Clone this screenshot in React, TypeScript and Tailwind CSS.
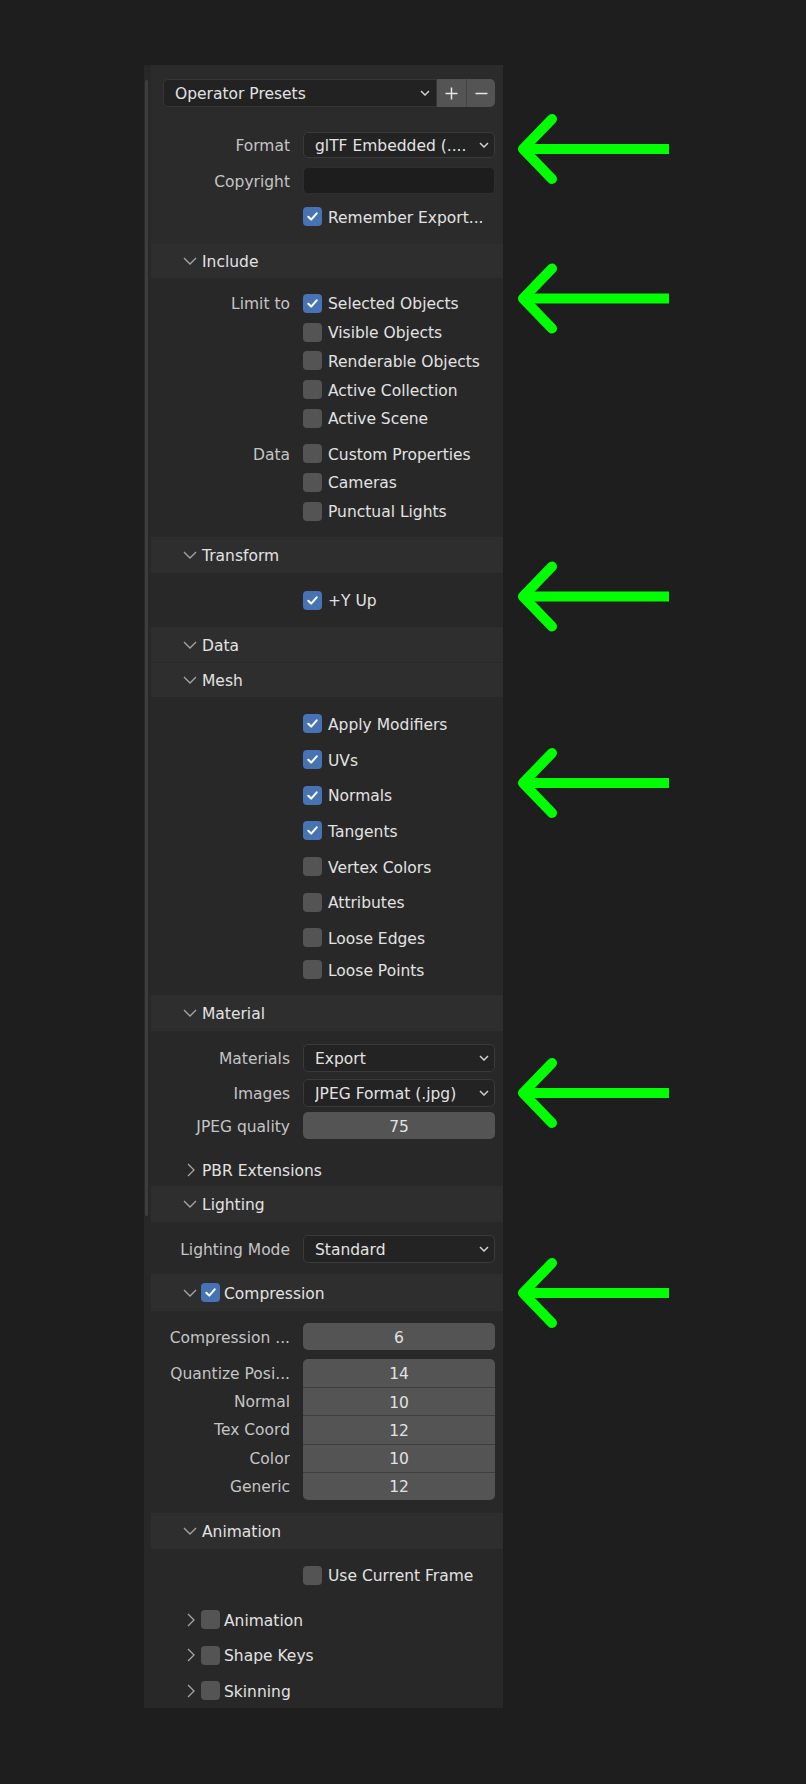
import type { ReactNode } from "react";

// Blender glTF export sidebar with annotation arrows

const ARROWS = [149, 298.5, 596.5, 783, 1093, 1293];

function Check({ on = false }: { on?: boolean }) {
  return (
    <span
      className={
        on
          ? "flex h-[19px] w-[19px] shrink-0 items-center justify-center rounded-[4px] bg-[#4772b3]"
          : "flex h-[19px] w-[19px] shrink-0 items-center justify-center rounded-[4px] bg-[#545454]"
      }
    >
      {on && (
        <svg width="13" height="13" viewBox="0 0 13 13">
          <path
            d="M2.3 6.8 L5.2 9.6 L10.7 3.4"
            fill="none"
            stroke="#ffffff"
            strokeWidth="2.1"
            strokeLinecap="round"
            strokeLinejoin="round"
          />
        </svg>
      )}
    </span>
  );
}

function ChevronDown() {
  return (
    <svg width="14" height="8" viewBox="0 0 14 8" className="shrink-0">
      <path d="M1 1 L7 7 L13 1" fill="none" stroke="#a6a6a6" strokeWidth="1.3" />
    </svg>
  );
}

function ChevronRight() {
  return (
    <svg width="8" height="14" viewBox="0 0 8 14" className="shrink-0">
      <path d="M1 1 L7 7 L1 13" fill="none" stroke="#a6a6a6" strokeWidth="1.3" />
    </svg>
  );
}

function MenuArrow() {
  return (
    <svg width="10" height="6" viewBox="0 0 10 6" className="shrink-0">
      <path d="M1 1 L5 5 L9 1" fill="none" stroke="#d0d0d0" strokeWidth="1.5" />
    </svg>
  );
}

function Label({ children }: { children?: ReactNode }) {
  return <div className="w-[139px] shrink-0 truncate pt-[3px] text-right text-[#c4c4c4]">{children}</div>;
}

function Dropdown({ value }: { value: string }) {
  return (
    <div className="ml-[13px] flex h-full w-[192px] items-center rounded-[5px] border border-[#3a3a3a] bg-[#232323] pl-[11px] pr-[5px] text-[#e2e2e2]">
      <span className="flex-1 truncate pt-[3px]">{value}</span>
      <MenuArrow />
    </div>
  );
}

function NumField({ value }: { value: string }) {
  return (
    <div className="ml-[13px] flex h-full w-[192px] items-center justify-center rounded-[5px] bg-[#545454] text-[#e2e2e2]">
      <span className="pt-[3px]">{value}</span>
    </div>
  );
}

function CheckRow({ label, text, on, className }: { label?: string; text: string; on?: boolean; className: string }) {
  return (
    <div className={`flex items-center ${className}`}>
      <Label>{label}</Label>
      <div className="ml-[13px] flex items-center gap-[6px] text-[#e2e2e2]">
        <Check on={on} />
        <span className="pt-[3px]">{text}</span>
      </div>
    </div>
  );
}

function Header({ title, className, check }: { title: string; className: string; check?: boolean }) {
  return (
    <div className={`flex items-center bg-[#2e2e2e] pl-[32px] text-[#e2e2e2] ${className}`}>
      <ChevronDown />
      {check !== undefined && (
        <span className="ml-[4px]">
          <Check on={check} />
        </span>
      )}
      <span className={check !== undefined ? "ml-[4px] pt-[3px]" : "ml-[5px] pt-[3px]"}>{title}</span>
    </div>
  );
}

function SubHeader({ title, check, className }: { title: string; check?: boolean; className: string }) {
  return (
    <div className={`flex items-center pl-[36px] text-[#e2e2e2] ${className}`}>
      <ChevronRight />
      {check !== undefined ? (
        <>
          <span className="ml-[6px]">
            <Check on={check} />
          </span>
          <span className="ml-[4px] pt-[3px]">{title}</span>
        </>
      ) : (
        <span className="ml-[7px] pt-[3px]">{title}</span>
      )}
    </div>
  );
}

const MESH = [
  { text: "Apply Modifiers", on: true },
  { text: "UVs", on: true },
  { text: "Normals", on: true },
  { text: "Tangents", on: true },
  { text: "Vertex Colors", on: false },
  { text: "Attributes", on: false },
  { text: "Loose Edges", on: false },
];

const QUANT = [
  { label: "Quantize Posi...", value: "14", cls: "rounded-t-[5px]" },
  { label: "Normal", value: "10", cls: "border-t border-[#3e3e3e]" },
  { label: "Tex Coord", value: "12", cls: "border-t border-[#3e3e3e]" },
  { label: "Color", value: "10", cls: "border-t border-[#3e3e3e]" },
  { label: "Generic", value: "12", cls: "rounded-b-[5px] border-t border-[#3e3e3e]" },
];

export default function App() {
  return (
    <div className="relative h-[1784px] w-[806px] overflow-hidden bg-[#1e1e1e] font-['DejaVu_Sans',sans-serif] text-[15.5px] leading-[19px]">
      <div className="pl-[144px] pt-[65px]">
        <div className="flex w-[359px] bg-[#282828]">
          {/* region edge + scrollbar */}
          <div className="relative w-[7px] shrink-0">
            <div className="absolute left-[1px] top-[15px] h-[1136px] w-[3px] rounded-full bg-[#3d3d3d]" />
          </div>

          <div className="w-[352px]">
            {/* top properties */}
            <div className="h-[179px] bg-[#2b2b2b] pt-[14px]">
              <div className="ml-[12px] flex h-[28px] w-[332px]">
                <div className="flex flex-1 items-center rounded-l-[5px] border border-[#363636] bg-[#222222] pl-[11px] pr-[6px] text-[#e2e2e2]">
                  <span className="flex-1 pt-[3px]">Operator Presets</span>
                  <MenuArrow />
                </div>
                <div className="flex w-[29px] items-center justify-center bg-[#545454]">
                  <svg width="13" height="13" viewBox="0 0 13 13">
                    <path d="M6.5 0.5 V12.5 M0.5 6.5 H12.5" stroke="#e6e6e6" strokeWidth="1.5" />
                  </svg>
                </div>
                <div className="flex w-[29px] items-center justify-center rounded-r-[5px] border-l border-[#444444] bg-[#545454]">
                  <svg width="13" height="13" viewBox="0 0 13 13">
                    <path d="M0.5 6.5 H12.5" stroke="#e6e6e6" strokeWidth="1.5" />
                  </svg>
                </div>
              </div>

              <div className="mt-[25px] flex h-[26px] items-center">
                <Label>Format</Label>
                <Dropdown value="glTF Embedded (...." />
              </div>
              <div className="mt-[9px] flex h-[27px] items-center">
                <Label>Copyright</Label>
                <div className="ml-[13px] h-full w-[192px] rounded-[5px] border border-[#2e2e2e] bg-[#1d1d1d]" />
              </div>
              <CheckRow className="mt-[9px] h-[27px]" text="Remember Export..." on />
            </div>

            {/* Include */}
            <Header title="Include" className="h-[34px]" />
            <div className="h-[259px] pt-[11px]">
              <CheckRow className="h-[28.75px]" label="Limit to" text="Selected Objects" on />
              <CheckRow className="h-[28.75px]" text="Visible Objects" />
              <CheckRow className="h-[28.75px]" text="Renderable Objects" />
              <CheckRow className="h-[28.75px]" text="Active Collection" />
              <CheckRow className="h-[28.75px]" text="Active Scene" />
              <CheckRow className="mt-[6.5px] h-[28.75px]" label="Data" text="Custom Properties" />
              <CheckRow className="h-[28.75px]" text="Cameras" />
              <CheckRow className="h-[28.75px]" text="Punctual Lights" />
            </div>

            {/* Transform */}
            <Header title="Transform" className="h-[36px]" />
            <div className="h-[54px] pt-[12.5px]">
              <CheckRow className="h-[29px]" text="+Y Up" on />
            </div>

            {/* Data / Mesh */}
            <Header title="Data" className="h-[35px]" />
            <Header title="Mesh" className="h-[35px] border-t border-[#2a2a2a]" />
            <div className="h-[298px] pt-[9px]">
              {MESH.map((m) => (
                <CheckRow key={m.text} className="h-[35.7px]" text={m.text} on={m.on} />
              ))}
              <CheckRow className="h-[28px]" text="Loose Points" />
            </div>

            {/* Material */}
            <Header title="Material" className="h-[36px]" />
            <div className="h-[155px] pt-[13px]">
              <div className="flex h-[28px] items-center">
                <Label>Materials</Label>
                <Dropdown value="Export" />
              </div>
              <div className="mt-[7px] flex h-[28px] items-center">
                <Label>Images</Label>
                <Dropdown value="JPEG Format (.jpg)" />
              </div>
              <div className="mt-[5px] flex h-[27px] items-center">
                <Label>JPEG quality</Label>
                <NumField value="75" />
              </div>
              <SubHeader title="PBR Extensions" className="mt-[16px] h-[30px]" />
            </div>

            {/* Lighting */}
            <Header title="Lighting" className="h-[36px]" />
            <div className="h-[52px] pt-[13px]">
              <div className="flex h-[28px] items-center">
                <Label>Lighting Mode</Label>
                <Dropdown value="Standard" />
              </div>
            </div>

            {/* Compression */}
            <Header title="Compression" check className="h-[37px]" />
            <div className="h-[202px] pt-[12px]">
              <div className="flex h-[27px] items-center">
                <Label>Compression ...</Label>
                <NumField value="6" />
              </div>
              <div className="mt-[9px]">
                {QUANT.map((q) => (
                  <div key={q.label} className="flex h-[28.2px] items-center">
                    <Label>{q.label}</Label>
                    <div
                      className={`ml-[13px] flex h-full w-[192px] items-center justify-center bg-[#545454] text-[#e2e2e2] ${q.cls}`}
                    >
                      <span className="pt-[3px]">{q.value}</span>
                    </div>
                  </div>
                ))}
              </div>
            </div>

            {/* Animation */}
            <Header title="Animation" className="h-[36px]" />
            <div className="h-[159px] pt-[12px]">
              <CheckRow className="h-[28px]" text="Use Current Frame" />
              <SubHeader title="Animation" check={false} className="mt-[13px] h-[35.5px]" />
              <SubHeader title="Shape Keys" check={false} className="h-[35.5px]" />
              <SubHeader title="Skinning" check={false} className="h-[35.5px]" />
            </div>
          </div>
        </div>
      </div>

      {/* annotation arrows */}
      <svg className="pointer-events-none absolute left-0 top-0" width="806" height="1784" viewBox="0 0 806 1784">
        {ARROWS.map((y) => (
          <g key={y} fill="none" stroke="#00ff00" strokeWidth="10">
            <path d={`M669 ${y} H526`} strokeLinecap="butt" />
            <path
              d={`M552 ${y - 30} L523 ${y} L552 ${y + 30}`}
              strokeLinecap="round"
              strokeLinejoin="round"
            />
          </g>
        ))}
      </svg>
    </div>
  );
}
